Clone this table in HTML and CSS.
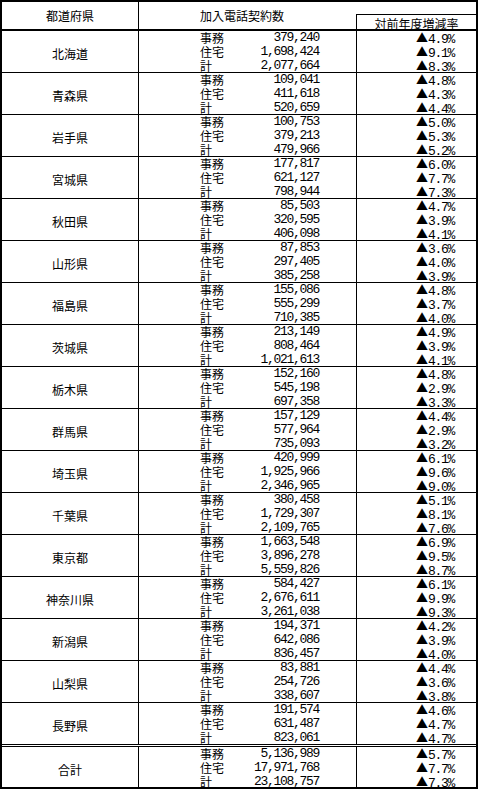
FILE: index.html
```html
<!DOCTYPE html>
<html lang="ja">
<head>
<meta charset="utf-8">
<title>加入電話契約数</title>
<link rel="stylesheet" href="styles.css">
</head>
<body>
<div class="sheet">
  <div class="head">
    <div class="h-pref">都道府県</div>
    <div class="h-main">
      <div class="h-title">加入電話契約数</div>
      <div class="h-sub">対前年度増減率</div>
    </div>
  </div>

  <div class="row"><div class="pref">北海道</div><div class="mid"><span class="lb">事務</span><span class="num">379,240</span><span class="lb">住宅</span><span class="num">1,698,424</span><span class="lb">計</span><span class="num">2,077,664</span></div><div class="rate"><span><i>▲</i>4.9%</span><span><i>▲</i>9.1%</span><span><i>▲</i>8.3%</span></div></div>

  <div class="row"><div class="pref">青森県</div><div class="mid"><span class="lb">事務</span><span class="num">109,041</span><span class="lb">住宅</span><span class="num">411,618</span><span class="lb">計</span><span class="num">520,659</span></div><div class="rate"><span><i>▲</i>4.8%</span><span><i>▲</i>4.3%</span><span><i>▲</i>4.4%</span></div></div>

  <div class="row"><div class="pref">岩手県</div><div class="mid"><span class="lb">事務</span><span class="num">100,753</span><span class="lb">住宅</span><span class="num">379,213</span><span class="lb">計</span><span class="num">479,966</span></div><div class="rate"><span><i>▲</i>5.0%</span><span><i>▲</i>5.3%</span><span><i>▲</i>5.2%</span></div></div>

  <div class="row"><div class="pref">宮城県</div><div class="mid"><span class="lb">事務</span><span class="num">177,817</span><span class="lb">住宅</span><span class="num">621,127</span><span class="lb">計</span><span class="num">798,944</span></div><div class="rate"><span><i>▲</i>6.0%</span><span><i>▲</i>7.7%</span><span><i>▲</i>7.3%</span></div></div>

  <div class="row"><div class="pref">秋田県</div><div class="mid"><span class="lb">事務</span><span class="num">85,503</span><span class="lb">住宅</span><span class="num">320,595</span><span class="lb">計</span><span class="num">406,098</span></div><div class="rate"><span><i>▲</i>4.7%</span><span><i>▲</i>3.9%</span><span><i>▲</i>4.1%</span></div></div>

  <div class="row"><div class="pref">山形県</div><div class="mid"><span class="lb">事務</span><span class="num">87,853</span><span class="lb">住宅</span><span class="num">297,405</span><span class="lb">計</span><span class="num">385,258</span></div><div class="rate"><span><i>▲</i>3.6%</span><span><i>▲</i>4.0%</span><span><i>▲</i>3.9%</span></div></div>

  <div class="row"><div class="pref">福島県</div><div class="mid"><span class="lb">事務</span><span class="num">155,086</span><span class="lb">住宅</span><span class="num">555,299</span><span class="lb">計</span><span class="num">710,385</span></div><div class="rate"><span><i>▲</i>4.8%</span><span><i>▲</i>3.7%</span><span><i>▲</i>4.0%</span></div></div>

  <div class="row"><div class="pref">茨城県</div><div class="mid"><span class="lb">事務</span><span class="num">213,149</span><span class="lb">住宅</span><span class="num">808,464</span><span class="lb">計</span><span class="num">1,021,613</span></div><div class="rate"><span><i>▲</i>4.9%</span><span><i>▲</i>3.9%</span><span><i>▲</i>4.1%</span></div></div>

  <div class="row"><div class="pref">栃木県</div><div class="mid"><span class="lb">事務</span><span class="num">152,160</span><span class="lb">住宅</span><span class="num">545,198</span><span class="lb">計</span><span class="num">697,358</span></div><div class="rate"><span><i>▲</i>4.8%</span><span><i>▲</i>2.9%</span><span><i>▲</i>3.3%</span></div></div>

  <div class="row"><div class="pref">群馬県</div><div class="mid"><span class="lb">事務</span><span class="num">157,129</span><span class="lb">住宅</span><span class="num">577,964</span><span class="lb">計</span><span class="num">735,093</span></div><div class="rate"><span><i>▲</i>4.4%</span><span><i>▲</i>2.9%</span><span><i>▲</i>3.2%</span></div></div>

  <div class="row"><div class="pref">埼玉県</div><div class="mid"><span class="lb">事務</span><span class="num">420,999</span><span class="lb">住宅</span><span class="num">1,925,966</span><span class="lb">計</span><span class="num">2,346,965</span></div><div class="rate"><span><i>▲</i>6.1%</span><span><i>▲</i>9.6%</span><span><i>▲</i>9.0%</span></div></div>

  <div class="row"><div class="pref">千葉県</div><div class="mid"><span class="lb">事務</span><span class="num">380,458</span><span class="lb">住宅</span><span class="num">1,729,307</span><span class="lb">計</span><span class="num">2,109,765</span></div><div class="rate"><span><i>▲</i>5.1%</span><span><i>▲</i>8.1%</span><span><i>▲</i>7.6%</span></div></div>

  <div class="row"><div class="pref">東京都</div><div class="mid"><span class="lb">事務</span><span class="num">1,663,548</span><span class="lb">住宅</span><span class="num">3,896,278</span><span class="lb">計</span><span class="num">5,559,826</span></div><div class="rate"><span><i>▲</i>6.9%</span><span><i>▲</i>9.5%</span><span><i>▲</i>8.7%</span></div></div>

  <div class="row"><div class="pref">神奈川県</div><div class="mid"><span class="lb">事務</span><span class="num">584,427</span><span class="lb">住宅</span><span class="num">2,676,611</span><span class="lb">計</span><span class="num">3,261,038</span></div><div class="rate"><span><i>▲</i>6.1%</span><span><i>▲</i>9.9%</span><span><i>▲</i>9.3%</span></div></div>

  <div class="row"><div class="pref">新潟県</div><div class="mid"><span class="lb">事務</span><span class="num">194,371</span><span class="lb">住宅</span><span class="num">642,086</span><span class="lb">計</span><span class="num">836,457</span></div><div class="rate"><span><i>▲</i>4.2%</span><span><i>▲</i>3.9%</span><span><i>▲</i>4.0%</span></div></div>

  <div class="row"><div class="pref">山梨県</div><div class="mid"><span class="lb">事務</span><span class="num">83,881</span><span class="lb">住宅</span><span class="num">254,726</span><span class="lb">計</span><span class="num">338,607</span></div><div class="rate"><span><i>▲</i>4.4%</span><span><i>▲</i>3.6%</span><span><i>▲</i>3.8%</span></div></div>

  <div class="row row-last"><div class="pref">長野県</div><div class="mid"><span class="lb">事務</span><span class="num">191,574</span><span class="lb">住宅</span><span class="num">631,487</span><span class="lb">計</span><span class="num">823,061</span></div><div class="rate"><span><i>▲</i>4.6%</span><span><i>▲</i>4.7%</span><span><i>▲</i>4.7%</span></div></div>

  <div class="row row-total"><div class="pref">合計</div><div class="mid"><span class="lb">事務</span><span class="num">5,136,989</span><span class="lb">住宅</span><span class="num">17,971,768</span><span class="lb">計</span><span class="num">23,108,757</span></div><div class="rate"><span><i>▲</i>5.7%</span><span><i>▲</i>7.7%</span><span><i>▲</i>7.3%</span></div></div>
</div>
</body>
</html>
```

FILE: styles.css
```css
html, body {
  margin: 0;
  padding: 0;
  background: #fff;
}

body {
  font-family: "Noto Sans CJK JP", "Noto Sans", sans-serif;
  font-size: 12px;
  color: #000;
}

.sheet {
  width: 478px;
  box-sizing: border-box;
  border: 2px solid #000;
}

.head {
  display: grid;
  grid-template-columns: 137px 337px;
  height: 29px;
  box-sizing: border-box;
  border-bottom: 2px solid #000;
}

.h-pref {
  border-right: 1px solid #000;
  text-align: center;
  line-height: 27px;
}

.h-main {
  display: grid;
  grid-template-columns: 217px 120px;
  grid-template-rows: 12px 15px;
}

.h-title {
  grid-column: 1 / 3;
  grid-row: 1 / 3;
  padding-left: 61px;
  line-height: 27px;
}

.h-sub {
  grid-column: 2;
  grid-row: 2;
  border-top: 1px solid #000;
  border-left: 1px solid #000;
  text-align: center;
  line-height: 14px;
  padding-top: 2px;
  height: 15px;
  box-sizing: border-box;
  white-space: nowrap;
}

.row {
  display: grid;
  grid-template-columns: 137px 218px 119px;
  height: 42px;
  box-sizing: border-box;
  border-bottom: 1px solid #000;
}

.row-last {
  height: 44px;
  border-bottom: 3px double #000;
}

.row-total {
  height: 40px;
  border-bottom: none;
}

.pref {
  border-right: 1px solid #000;
  display: flex;
  align-items: center;
  justify-content: center;
  padding-top: 2px;
  box-sizing: border-box;
}

.mid {
  border-right: 1px solid #000;
  display: grid;
  grid-template-columns: auto 1fr;
  grid-auto-rows: 14px;
  padding: 0 37px 0 61px;
  line-height: 14px;
}

.lb {
  white-space: nowrap;
}

.num {
  text-align: right;
  font-family: "Liberation Mono", monospace;
  font-size: 13px;
  letter-spacing: -1.3px;
  line-height: 14px;
}

.rate {
  display: grid;
  grid-auto-rows: 14px;
  justify-items: end;
  padding-right: 22px;
  line-height: 14px;
}

.rate span {
  font-family: "Liberation Mono", monospace;
  font-size: 13px;
  letter-spacing: -1.3px;
  white-space: nowrap;
}

.rate i {
  font-style: normal;
  font-family: "Noto Sans CJK JP", sans-serif;
  font-size: 12px;
  letter-spacing: 0;
}
```
